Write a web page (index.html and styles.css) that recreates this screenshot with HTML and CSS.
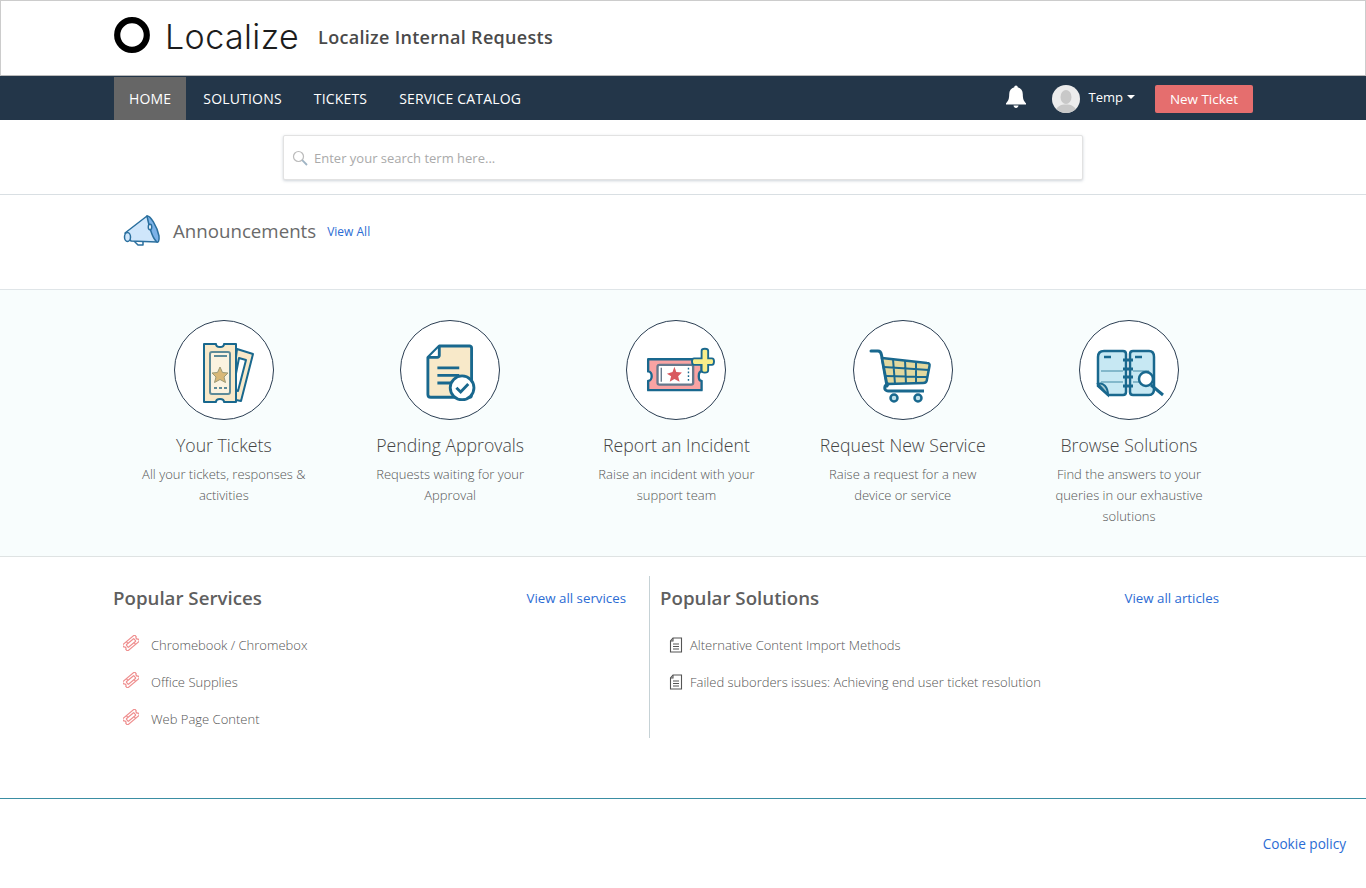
FILE: index.html
```html
<!DOCTYPE html>
<html lang="en">
<head>
<meta charset="utf-8">
<title>Localize Internal Requests</title>
<link rel="stylesheet" href="styles.css">
</head>
<body>
<svg width="0" height="0" class="defs">
  <defs>
    <symbol id="ico-ticket" viewBox="0 0 24 24"><g transform="rotate(-40 12 12)" fill="none" stroke="#ef8f8f" stroke-width="1.800" stroke-linejoin="round"><path d="M0 6H24V10C22 10 22 14 24 14V18H0V14C2 14 2 10 0 10Z"/><rect x="4.500" y="9.500" width="15" height="5" rx="1"/><path d="M8 6V9.500M16 14.500V18"/></g></symbol>
    <symbol id="ico-doc" viewBox="0 0 14 16"><g fill="none" stroke="#555" stroke-width="1.100"><path d="M4 1H12.500V15H1.500V4Z"/><path d="M4 1V4H1.500"/><path d="M4 7H10M4 9.500H10M4 12H10"/></g></symbol>
  </defs>
</svg>

<header class="brand">
  <div class="brand-in">
    <svg class="logo-ring" width="36" height="36" viewBox="0 0 36 36"><circle cx="18" cy="18" r="14.800" fill="none" stroke="#000" stroke-width="6.200"/></svg>
    <span class="logo-word">Localize</span>
    <span class="site-title">Localize Internal Requests</span>
  </div>
</header>

<nav class="nav">
  <div class="nav-in">
    <a class="nav-link active">HOME</a>
    <a class="nav-link">SOLUTIONS</a>
    <a class="nav-link">TICKETS</a>
    <a class="nav-link">SERVICE CATALOG</a>
    <div class="nav-right">
      <svg class="bell" width="22" height="24" viewBox="0 0 22 24"><path fill="#fff" d="M11 0.500C9.900 0.500 9.300 1.300 9.300 2.300 6 3.100 4.200 5.800 4.200 9.200 4.200 14 3.200 16 1 18.200V19.500H21V18.200C18.800 16 17.800 14 17.800 9.200 17.800 5.800 16 3.100 12.700 2.300 12.700 1.300 12.100 0.500 11 0.500ZM8.500 20.500C8.700 22 9.700 23 11 23S13.300 22 13.500 20.500Z"/></svg>
      <svg class="avatar" width="28" height="28" viewBox="0 0 28 28"><defs><clipPath id="av"><circle cx="14" cy="14" r="14"/></clipPath></defs><g clip-path="url(#av)"><rect width="28" height="28" fill="#ececec"/><ellipse cx="14" cy="12" rx="5.500" ry="7" fill="#c8c8c8"/><path d="M3 28C4 21 9 19.500 14 19.500S24 21 25 28Z" fill="#c8c8c8"/></g></svg>
      <span class="user">Temp</span>
      <span class="caret"></span>
      <a class="new-ticket">New Ticket</a>
    </div>
  </div>
</nav>

<section class="search-bar">
  <div class="search-box">
    <svg width="16" height="16" viewBox="0 0 16 16"><circle cx="6.500" cy="6.500" r="5" fill="none" stroke="#bbb" stroke-width="1.200"/><path d="M10.200 10.200 15 15" stroke="#9fb4c4" stroke-width="1.800"/></svg>
    <span class="search-ph">Enter your search term here...</span>
  </div>
</section>

<section class="announce">
  <svg class="mega" width="38" height="34" viewBox="0 0 38 34">
    <g stroke="#2a6f9e" stroke-width="1.500" stroke-linejoin="round">
      <path d="M11 27 15 31 20 31 20 28" fill="#fff"/>
      <path d="M2 19 24 2 34 28 8 27Z" fill="#cfe6fb"/>
      <path d="M24 2C27 1 34 12 36 22 36.500 27 35 29 34 28 30 25 26 12 24 2Z" fill="#7cb2e8"/>
      <ellipse cx="4.500" cy="23" rx="3" ry="4.500" fill="#cfe6fb"/>
      <ellipse cx="27" cy="13" rx="1.700" ry="2.700" fill="#fff"/>
    </g>
  </svg>
  <h2 class="announce-title">Announcements</h2>
  <a class="link view-all">View All</a>
</section>

<section class="band">
  <div class="cards">
    <article class="card">
      <div class="circle">
        <svg width="60" height="64" viewBox="-5 -3 60 64">
          <g stroke="#19688e" stroke-width="2" stroke-linejoin="round">
            <path d="M38 8 54 13 42 60 32 58Z" fill="#f8e9c9"/>
            <path d="M40 17 47 19 39 50 34 48Z" fill="#fff"/>
            <path d="M5 3H17C17 7 25 7 25 3H37V61H25C25 57 17 57 17 61H5Z" fill="#f8e9c9"/>
            <rect x="11" y="11" width="20" height="42" rx="2" fill="#fbf3e0" stroke="#5d8b99"/>
          </g>
          <path d="M15 15H28" stroke="#5d8b99" stroke-width="2"/>
          <path d="M21 26 23.500 31.500 29 32 25 36 26.500 41.500 21 38.500 15.500 41.500 17 36 13 32 18.500 31.500Z" fill="#d9b877" stroke="#9c9a77"/>
          <path d="M15 47H28" stroke="#5d8b99" stroke-width="2" stroke-dasharray="3 2"/>
        </svg>
      </div>
      <h3 class="card-title">Your Tickets</h3>
      <p class="card-text">All your tickets, responses &amp; activities</p>
    </article>

    <article class="card">
      <div class="circle">
        <svg width="57" height="61" viewBox="-4.200 -4.200 60 64">
          <path d="M14 2H46C47 2 48 3 48 4V53C48 55 47 56 46 56H5C3 56 2 55 2 53V14Z" fill="#f8e9c9" stroke="#19688e" stroke-width="3" stroke-linejoin="round"/>
          <path d="M14 3V12C14 13 13 14 12 14H3" fill="#fff" stroke="#19688e" stroke-width="3"/>
          <path d="M12 25H35M12 33H35M12 41H28" stroke="#19688e" stroke-width="3"/>
          <circle cx="38" cy="46" r="12.500" fill="#fff" stroke="#19688e" stroke-width="3"/>
          <path d="M32 46 36.500 50.500 44.500 42" fill="none" stroke="#19688e" stroke-width="3"/>
        </svg>
      </div>
      <h3 class="card-title">Pending Approvals</h3>
      <p class="card-text">Requests waiting for your Approval</p>
    </article>

    <article class="card">
      <div class="circle">
        <svg width="68" height="45" viewBox="-5.300 0 72 48">
          <path d="M1 12H58V25C54 25 54 35 58 35V45H1V35C6 35 6 25 1 25Z" fill="#f9a3a3" stroke="#19688e" stroke-width="2.500" stroke-linejoin="round"/>
          <rect x="11" y="18" width="38" height="21" rx="2" fill="#fff" stroke="#66788c" stroke-width="2.500"/>
          <path d="M15 21V36" stroke="#66788c" stroke-width="1.500"/>
          <path d="M44 21V36" stroke="#19688e" stroke-width="1.500" stroke-dasharray="2 2"/>
          <path d="M29 20 31 25.500 37 26 33 30 34.500 36 29 33 24 36 25.500 30 21 27.500 27 25.500Z" fill="#d9595f"/>
          <path d="M50 11H58V3C58 0 65 0 65 3V11H69C72 11 72 18 69 18H65V24C65 27 58 27 58 24V18H50C47 18 47 11 50 11Z" fill="#f8ee8a" stroke="#19688e" stroke-width="2"/>
        </svg>
      </div>
      <h3 class="card-title">Report an Incident</h3>
      <p class="card-text">Raise an incident with your support team</p>
    </article>

    <article class="card">
      <div class="circle">
        <svg width="64" height="56" viewBox="2 -6 64 56">
          <path d="M2 3H9C11 3 12 4 12.500 7L18 38" fill="none" stroke="#19688e" stroke-width="3" stroke-linecap="round"/>
          <path d="M13 10 58 15C60 15 61 16 60.500 18L58 31C58 34 56 35 54 35L18 36Z" fill="#e2d89e" stroke="#19688e" stroke-width="2.500" stroke-linejoin="round"/>
          <path d="M24 11 26 36M36 12 37 36M47 14 47 35M15 19 60 22M16 28 58 29" stroke="#19688e" stroke-width="2"/>
          <path d="M20 36C14 37 15 43 19 43H55" fill="none" stroke="#19688e" stroke-width="3"/>
          <circle cx="25" cy="50" r="3.500" fill="#bfe0ea" stroke="#19688e" stroke-width="2.500"/>
          <circle cx="49" cy="50" r="3.500" fill="#bfe0ea" stroke="#19688e" stroke-width="2.500"/>
        </svg>
      </div>
      <h3 class="card-title">Request New Service</h3>
      <p class="card-text">Raise a request for a new device or service</p>
    </article>

    <article class="card">
      <div class="circle">
        <svg width="70" height="46" viewBox="-3 -3 70 46">
          <path d="M7 1H26C28 1 29 2 29 4V42C29 44 28 45 26 45H11L1 36V7C1 3 3 1 7 1Z" fill="#c7e8f3" stroke="#19688e" stroke-width="2.500"/>
          <path d="M36 1H52C55 1 57 3 57 7V39C57 43 55 45 52 45H36C34 45 33 44 33 42V4C33 2 34 1 36 1Z" fill="#c7e8f3" stroke="#19688e" stroke-width="2.500"/>
          <path d="M7 7H14M38 7H45" stroke="#19688e" stroke-width="2.500"/>
          <path d="M4 21H26M4 32H26M36 21H52M36 32H52" stroke="#6da8bf" stroke-width="1.300"/>
          <path d="M26 10H36M26 19H36M26 27H36M26 36H36" stroke="#19688e" stroke-width="3"/>
          <path d="M1 34C6 32 11 37 11 45Z" fill="#a9cbd2" stroke="#19688e" stroke-width="2"/>
          <circle cx="49" cy="29" r="7" fill="#fff" stroke="#19688e" stroke-width="2.500"/>
          <path d="M54 35 66 45" stroke="#19688e" stroke-width="3"/>
        </svg>
      </div>
      <h3 class="card-title">Browse Solutions</h3>
      <p class="card-text card-text-narrow">Find the answers to your queries in our exhaustive solutions</p>
    </article>
  </div>
</section>

<section class="popular">
  <div class="pop-col pop-services">
    <div class="pop-head">
      <h2 class="pop-title">Popular Services</h2>
      <a class="link pop-link">View all services</a>
    </div>
    <ul class="pop-list">
      <li class="svc-item"><svg class="svc-ico" width="16" height="16"><use href="#ico-ticket"/></svg><span>Chromebook / Chromebox</span></li>
      <li class="svc-item"><svg class="svc-ico" width="16" height="16"><use href="#ico-ticket"/></svg><span>Office Supplies</span></li>
      <li class="svc-item"><svg class="svc-ico" width="16" height="16"><use href="#ico-ticket"/></svg><span>Web Page Content</span></li>
    </ul>
  </div>
  <div class="pop-col pop-solutions">
    <div class="pop-head">
      <h2 class="pop-title">Popular Solutions</h2>
      <a class="link pop-link">View all articles</a>
    </div>
    <ul class="pop-list">
      <li class="sol-item"><svg class="sol-ico" width="14" height="16"><use href="#ico-doc"/></svg><span>Alternative Content Import Methods</span></li>
      <li class="sol-item"><svg class="sol-ico" width="14" height="16"><use href="#ico-doc"/></svg><span>Failed suborders issues: Achieving end user ticket resolution</span></li>
    </ul>
  </div>
</section>

<footer class="footer">
  <a class="link cookie">Cookie policy</a>
</footer>
</body>
</html>
```

FILE: styles.css
```css
* { box-sizing: border-box; }
html, body { margin: 0; padding: 0; }
body {
  font-family: "Open Sans", sans-serif;
  color: #555;
  background: #fff;
  height: 888px;
  overflow: hidden;
}
.defs { position: absolute; }
a { text-decoration: none; }
.link { color: #2b6cd4; }

.brand {
  height: 76px;
  border: 1px solid #ccc;
  border-bottom-color: #bbb;
  background: #fff;
}
.brand-in {
  display: flex;
  align-items: center;
  height: 70px;
  padding-left: 113px;
}
.logo-ring { flex: none; margin-top: -2px; }
.logo-word {
  font-family: Inter, sans-serif;
  font-size: 34px;
  font-weight: 300;
  letter-spacing: .4px;
  color: #1c1c1c;
  margin-left: 15px;
}
.site-title {
  font-size: 18px;
  font-weight: 600;
  letter-spacing: .3px;
  color: #4a4a4a;
  margin-left: 19px;
  margin-top: 2px;
}

.nav { height: 44px; background: #233649; }
.nav-in {
  display: flex;
  align-items: stretch;
  height: 44px;
  padding: 1px 113px 0 114px;
}
.nav-link {
  display: flex;
  align-items: center;
  padding: 0 15px;
  margin-right: 2px;
  color: #fff;
  font-size: 14px;
  letter-spacing: .18px;
}
.nav-link.active { background: #666; }
.nav-right {
  margin-left: auto;
  display: flex;
  align-items: center;
}
.bell { flex: none; margin-right: 25px; margin-top: -4px; }
.avatar { flex: none; margin-right: 9px; }
.user { color: #fff; font-size: 13px; margin-top: -4px; }
.caret {
  width: 0;
  height: 0;
  border-left: 4px solid transparent;
  border-right: 4px solid transparent;
  border-top: 4px solid #fff;
  margin: -3px 0 0 4px;
}
.new-ticket {
  display: block;
  width: 98px;
  height: 28px;
  line-height: 29px;
  margin-left: 20px;
  text-align: center;
  background: #e56e6e;
  color: #fff;
  font-size: 13.400px;
  border-radius: 2px;
}

.search-bar {
  height: 75px;
  border-bottom: 1px solid #d9dfe3;
  display: flex;
  justify-content: center;
  padding: 15px 0 0 0;
}
.search-box {
  width: 800px;
  height: 45px;
  border: 1px solid #e2e2e2;
  border-radius: 2px;
  box-shadow: 0 1px 3px rgba(90, 110, 130, .3);
  display: flex;
  align-items: center;
  gap: 6px;
  padding-left: 8px;
  background: #fff;
}
.search-ph { font-size: 13px; color: #aaa; }

.announce {
  height: 95px;
  border-bottom: 1px solid #dfe5e8;
  display: flex;
  align-items: flex-start;
  padding: 19px 0 0 123px;
}
.mega { flex: none; }
.announce-title {
  margin: 2px 0 0 12px;
  font-size: 18.700px;
  font-weight: 400;
  line-height: 30px;
  color: #6a6a6a;
}
.view-all { font-size: 12px; margin: 9px 0 0 11px; line-height: 18px; }

.band {
  height: 267px;
  background: #f8fdfd;
  border-bottom: 1px solid #dfe3e3;
  padding: 30px 0 0 110.700px;
}
.cards { display: grid; grid-template-columns: repeat(5, 226.3px); }
.card { display: flex; flex-direction: column; align-items: center; text-align: center; }
.circle {
  width: 100px;
  height: 100px;
  border: 1px solid #2a3d52;
  border-radius: 50%;
  background: #fff;
  display: flex;
  align-items: center;
  justify-content: center;
}
.circle svg { flex: none; overflow: visible; }
.card-title {
  margin: 12px 0 0;
  font-size: 17.700px;
  font-weight: 300;
  line-height: 26px;
  color: #444;
}
.card-text {
  margin: 6px 0 0;
  width: 180px;
  font-size: 13px;
  font-weight: 300;
  line-height: 21px;
  color: #555;
}
.card-text-narrow { width: 160px; }

.popular {
  display: flex;
  height: 242px;
  padding: 19px 0 0 113px;
  border-bottom: 1px solid #3a8ea3;
}
.pop-col { height: 162px; }
.pop-services { width: 537px; padding-right: 23px; border-right: 1px solid #c6d2d6; }
.pop-solutions { width: 569px; padding-left: 10px; }
.pop-head {
  display: flex;
  justify-content: space-between;
  align-items: center;
  height: 44px;
}
.pop-title {
  margin: -2px 0 0;
  font-size: 18.700px;
  font-weight: 600;
  color: #5f5f5f;
}
.pop-link { font-size: 13.300px; }
.pop-list {
  list-style: none;
  margin: 6px 0 0;
  padding: 0;
}
.svc-item, .sol-item {
  display: flex;
  align-items: center;
  height: 37px;
  font-size: 13px;
  font-weight: 300;
  color: #555;
}
.svc-item { padding-left: 10px; }
.svc-ico { margin: -4px 12px 0 0; flex: none; }
.sol-item { padding-left: 9px; }
.sol-ico { margin-right: 7px; flex: none; }

.footer {
  display: flex;
  justify-content: flex-end;
  padding: 35px 20px 0 0;
}
.cookie { font-size: 13.600px; }
```
